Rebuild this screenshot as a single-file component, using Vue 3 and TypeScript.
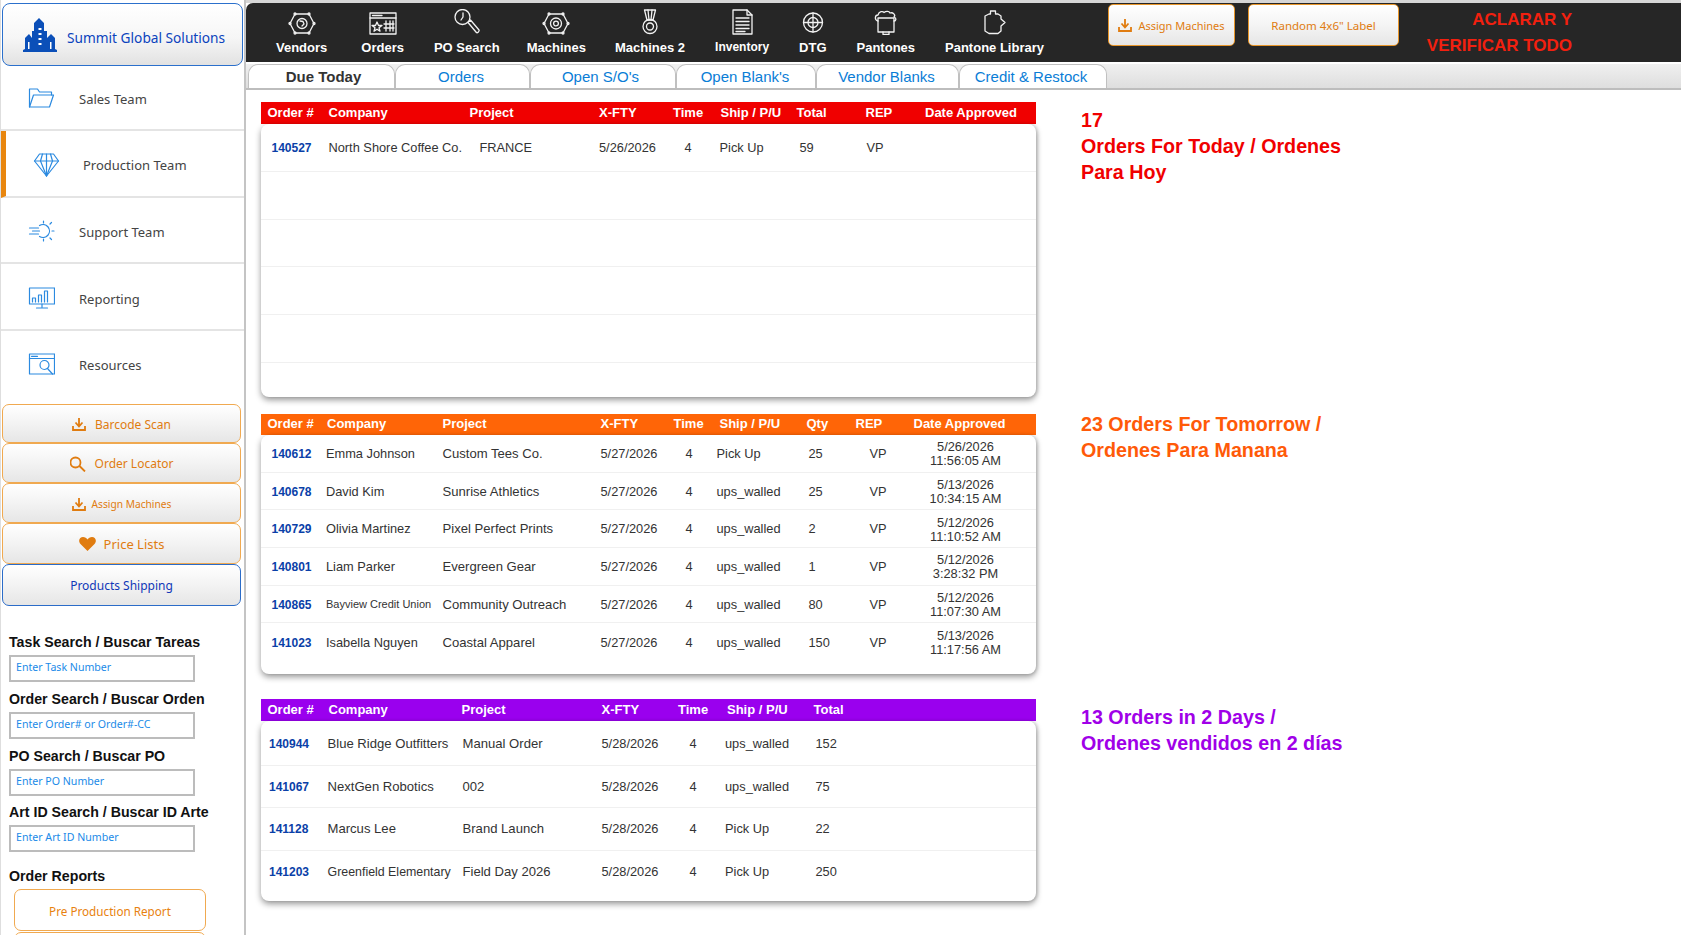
<script setup lang="ts">
const circle = (cx: number, cy: number, r: number): string =>
  `M${cx - r} ${cy}a${r} ${r} 0 1 0 ${r * 2} 0a${r} ${r} 0 1 0 ${-r * 2} 0`

const hexagon = 'M8 5H22L27 14.5L22 24H8L3 14.5Z'
const hexDots = [circle(8, 5, 1), circle(22, 5, 1), circle(27, 14.5, 1), circle(22, 24, 1), circle(8, 24, 1), circle(3, 14.5, 1)]

const navItems = [
  { label: 'Vendors', w: 'n1', paths: [hexagon, ...hexDots, circle(15, 14.5, 5), 'M13 12l3 .5 1 2.5-2 2'] },
  { label: 'Orders', w: 'n2', paths: ['M2 4H28V25H2Z', 'M2 9H28', 'M4.5 6.5H14', 'M9 13l1.5 3.5h3.5l-3 2.2 1 3.5-3-2-3 2 1-3.5-3-2.2h3.5Z', 'M18 12v10M22 12v10M25 12v10M16 15h10M16 19h10'] },
  { label: 'PO Search', w: 'n3', paths: [circle(10.5, 8, 7.5), 'M16 13.5l2.5-2.5 8.5 10c.8 1-1.6 3.4-2.6 2.5Z', 'M11 4v4l-2 3'] },
  { label: 'Machines', w: 'n4', paths: [hexagon, ...hexDots, circle(15, 14.5, 5.5), circle(15, 14.5, 2.4)] },
  { label: 'Machines 2', w: 'n5', paths: ['M9.5 1H20.5L18 11H12Z', 'M13 1L14 11M17 1L16 11', circle(15, 17.5, 7), circle(15, 17.5, 3.5)] },
  { label: 'Inventory', w: 'n6', paths: ['M6 1H20L25 6V25H6Z', 'M20 1V6H25', 'M9 9H22M9 12.5H22M9 16H22M9 19.5H22M9 22.5H18'] },
  { label: 'DTG', w: 'n7', paths: [circle(15, 13.5, 9.5), circle(15, 13.5, 5), 'M5.5 13.5H24.5M15 4V23'] },
  { label: 'Pantones', w: 'n8', paths: ['M7 12C3 11 4 6 7 6C8 2 12 2 13 3.5C15 2 18 2 19 4C22 3 25 6 23 8C26 9 25 12 23 12', 'M7 9H23V23H7Z', 'M12 23V25.5H18V23'] },
  { label: 'Pantone Library', w: 'n9', paths: ['M5 7L9 5H10.5V2H15.5V5H18L21 7V10L25 13.5L21 17V22L18 24.5H9L5 22Z'] },
]

const tabs = ['Due Today', 'Orders', "Open S/O's", "Open Blank's", 'Vendor Blanks', 'Credit & Restock']

const sideItems = [
  { label: 'Sales Team', cls: '', paths: ['M1 20V2H9L11 5H23V8', 'M1 20H21L25 8H5Z'] },
  { label: 'Production Team', cls: 'is-active', paths: ['M6 1H20L25 8L13 23L1 8Z', 'M1 8H25', 'M9 1L7 8L13 23L19 8L17 1', 'M13 1V23'] },
  { label: 'Support Team', cls: '', paths: ['M11 5.5A6.5 6.5 0 1 1 11 16.5', 'M15 1V3M15 19V21M21.5 4L23 2.5M21.5 18L23 19.5M23.5 11H25.5', 'M1 8H10M4 11H11M1 14H10'] },
  { label: 'Reporting', cls: '', paths: ['M1 1H26V17H1Z', 'M13.5 17V20M8 21H19', 'M4 15V11H7V15M10 15V8H13V15M16 15V4H19V15'] },
  { label: 'Resources', cls: '', paths: ['M1 1H26V21H1Z', 'M1 5.5H26', 'M3 3.3H9', circle(16, 12, 4.5), 'M19 15.5L24 21'] },
]

const downloadPaths = ['M7 1V9M3.5 5.5L7 9.5L10.5 5.5', 'M1 9V13H13V9']

const sideButtons = [
  { label: 'Barcode Scan', cls: 'b1', icon: 'download' },
  { label: 'Order Locator', cls: 'b2', icon: 'search' },
  { label: 'Assign Machines', cls: 'b3', icon: 'download' },
  { label: 'Price Lists', cls: 'b4', icon: 'heart' },
]

const searches = [
  { label: 'Task Search / Buscar Tareas', ph: 'Enter Task Number', cls: 's1' },
  { label: 'Order Search / Buscar Orden', ph: 'Enter Order# or Order#-CC', cls: 's2' },
  { label: 'PO Search / Buscar PO', ph: 'Enter PO Number', cls: 's3' },
  { label: 'Art ID Search / Buscar ID Arte', ph: 'Enter Art ID Number', cls: 's4' },
]

const head1 = ['Order #', 'Company', 'Project', 'X-FTY', 'Time', 'Ship / P/U', 'Total', 'REP', 'Date Approved']
const head2 = ['Order #', 'Company', 'Project', 'X-FTY', 'Time', 'Ship / P/U', 'Qty', 'REP', 'Date Approved']
const head3 = ['Order #', 'Company', 'Project', 'X-FTY', 'Time', 'Ship / P/U', 'Total']

const rows1 = [['140527', 'North Shore Coffee Co.', 'FRANCE', '5/26/2026', '4', 'Pick Up', '59', 'VP']]

const rows2 = [
  { c: ['140612', 'Emma Johnson', 'Custom Tees Co.', '5/27/2026', '4', 'Pick Up', '25', 'VP'], d: ['5/26/2026', '11:56:05 AM'] },
  { c: ['140678', 'David Kim', 'Sunrise Athletics', '5/27/2026', '4', 'ups_walled', '25', 'VP'], d: ['5/13/2026', '10:34:15 AM'] },
  { c: ['140729', 'Olivia Martinez', 'Pixel Perfect Prints', '5/27/2026', '4', 'ups_walled', '2', 'VP'], d: ['5/12/2026', '11:10:52 AM'] },
  { c: ['140801', 'Liam Parker', 'Evergreen Gear', '5/27/2026', '4', 'ups_walled', '1', 'VP'], d: ['5/12/2026', '3:28:32 PM'] },
  { c: ['140865', 'Bayview Credit Union', 'Community Outreach', '5/27/2026', '4', 'ups_walled', '80', 'VP'], d: ['5/12/2026', '11:07:30 AM'], small: true },
  { c: ['141023', 'Isabella Nguyen', 'Coastal Apparel', '5/27/2026', '4', 'ups_walled', '150', 'VP'], d: ['5/13/2026', '11:17:56 AM'] },
]

const rows3 = [
  ['140944', 'Blue Ridge Outfitters', 'Manual Order', '5/28/2026', '4', 'ups_walled', '152'],
  ['141067', 'NextGen Robotics', '002', '5/28/2026', '4', 'ups_walled', '75'],
  ['141128', 'Marcus Lee', 'Brand Launch', '5/28/2026', '4', 'Pick Up', '22'],
  ['141203', 'Greenfield Elementary', 'Field Day 2026', '5/28/2026', '4', 'Pick Up', '250'],
]
</script>

<template>
  <div class="page">
    <aside class="sidebar">
      <div class="brand">
        <svg class="brand-icon" viewBox="0 0 34 35" aria-hidden="true">
          <path class="brand-fill" d="M0 35V33L2 32V21L6 17L9 21V14H11V6L16 1L21 6V14H24V21L28 17L32 21V32L34 33V35Z" />
          <path class="brand-window" d="M15.5 11h3v2h-3zM15.5 16h3v2h-3zM15.5 21h3v2h-3zM15.5 26h3v2h-3zM5 25h1.5v7H5zM27 25h1.5v7H27z" />
        </svg>
        <span>Summit Global Solutions</span>
      </div>

      <div v-for="item in sideItems" :key="item.label" class="side-item" :class="item.cls">
        <svg class="side-icon" viewBox="0 0 26 24" aria-hidden="true">
          <path v-for="d in item.paths" :key="d" :d="d" />
        </svg>
        <span>{{ item.label }}</span>
      </div>

      <div class="side-buttons">
        <div v-for="b in sideButtons" :key="b.label" class="side-btn" :class="b.cls">
          <svg v-if="b.icon === 'download'" class="btn-icon" viewBox="0 0 14 14" aria-hidden="true">
            <path v-for="d in downloadPaths" :key="d" :d="d" />
          </svg>
          <svg v-else-if="b.icon === 'search'" class="btn-icon big" viewBox="0 0 16 16" aria-hidden="true">
            <path d="M10.5 6.5a5 5 0 1 0-10 0a5 5 0 1 0 10 0M9.5 10L15 15.5" />
          </svg>
          <svg v-else class="btn-heart" viewBox="0 0 17 14" aria-hidden="true">
            <path d="M8.5 14L1.5 7C-1.5 3.5 1 0 4 0C6 0 7.5 1 8.5 2.5C9.5 1 11 0 13 0C16 0 18.5 3.5 15.5 7Z" />
          </svg>
          <span>{{ b.label }}</span>
        </div>
        <div class="side-btn blue">Products Shipping</div>
      </div>

      <form class="searches" @submit.prevent>
        <label v-for="s in searches" :key="s.label" class="search" :class="s.cls">
          <span class="search-label">{{ s.label }}</span>
          <input type="text" :placeholder="s.ph" />
        </label>
      </form>

      <h3 class="reports-title">Order Reports</h3>
      <div class="report-btn">Pre Production Report</div>
      <div class="report-btn"></div>
    </aside>

    <main class="main">
      <header class="topbar">
        <nav class="nav">
          <a v-for="n in navItems" :key="n.label" class="nav-item" :class="n.w">
            <svg class="nav-icon" viewBox="0 0 30 26" aria-hidden="true">
              <path v-for="d in n.paths" :key="d" :d="d" />
            </svg>
            <span>{{ n.label }}</span>
          </a>
        </nav>
        <div class="top-btn assign">
          <svg class="btn-icon" viewBox="0 0 14 14" aria-hidden="true">
            <path v-for="d in downloadPaths" :key="d" :d="d" />
          </svg>
          <span>Assign Machines</span>
        </div>
        <div class="top-btn random">Random 4x6" Label</div>
        <div class="warning">ACLARAR Y<br />VERIFICAR TODO</div>
      </header>

      <div class="tabs">
        <a v-for="(t, i) in tabs" :key="t" class="tab" :class="['tab' + i, { active: i === 0 }]">{{ t }}</a>
      </div>

      <section class="block first">
        <div class="table t1">
          <div class="head red">
            <span v-for="h in head1" :key="h">{{ h }}</span>
          </div>
          <div class="card">
            <div v-for="r in rows1" :key="r[0]" class="row">
              <span v-for="(c, i) in r" :key="i" :class="{ id: i === 0 }">{{ c }}</span>
            </div>
            <div v-for="n in 4" :key="n" class="row"></div>
          </div>
        </div>
        <p class="note note-red">17<br />Orders For Today / Ordenes<br />Para Hoy</p>
      </section>

      <section class="block second">
        <div class="table t2">
          <div class="head orange">
            <span v-for="h in head2" :key="h">{{ h }}</span>
          </div>
          <div class="card">
            <div v-for="r in rows2" :key="r.c[0]" class="row">
              <span v-for="(c, i) in r.c" :key="i" :class="{ id: i === 0, small: i === 1 && r.small }">{{ c }}</span>
              <span class="date">{{ r.d[0] }}<br />{{ r.d[1] }}</span>
            </div>
          </div>
        </div>
        <p class="note note-orange">23 Orders For Tomorrow /<br />Ordenes Para Manana</p>
      </section>

      <section class="block third">
        <div class="table t3">
          <div class="head purple">
            <span v-for="h in head3" :key="h">{{ h }}</span>
          </div>
          <div class="card">
            <div v-for="r in rows3" :key="r[0]" class="row">
              <span v-for="(c, i) in r" :key="i" :class="{ id: i === 0 }">{{ c }}</span>
            </div>
          </div>
        </div>
        <p class="note note-purple">13 Orders in 2 Days /<br />Ordenes vendidos en 2 días</p>
      </section>
    </main>
  </div>
</template>

<style>
html,
body {
  margin: 0;
  background: #fff;
  overflow: hidden;
}
</style>

<style scoped>
.page {
  display: flex;
  height: 935px;
  overflow: hidden;
  background: #fff;
  font-family: "Liberation Sans", Arial, sans-serif;
  color: #333;
}

/* Sidebar */
.sidebar {
  flex: 0 0 246px;
  box-sizing: border-box;
  height: 935px;
  padding: 3px 0 0 0;
  border-left: 1px solid #dedede;
  border-right: 2px solid #c4c4c4;
  font-family: "Noto Sans", Tahoma, sans-serif;
  overflow: hidden;
}
.brand {
  box-sizing: border-box;
  width: 241px;
  height: 63px;
  margin-left: 1px;
  display: flex;
  align-items: center;
  padding: 0 0 0 20px;
  gap: 10px;
  border: 1.5px solid #2b70cc;
  border-radius: 8px;
  background: linear-gradient(#ffffff, #f6f6f6 55%, #e2e2e2);
  color: #0b43bd;
  font-size: 13.7px;
  white-space: nowrap;
}
.brand span {
  margin-top: 5px;
}
.brand-icon {
  width: 34px;
  height: 35px;
  flex: none;
}
.brand-fill {
  fill: #0b4fb8;
}
.brand-window {
  fill: #fff;
}
.side-item {
  box-sizing: border-box;
  height: 66.5px;
  display: flex;
  align-items: center;
  padding: 5px 0 0 27px;
  gap: 24px;
  border-bottom: 2px solid #e4e4e4;
  font-size: 13px;
  color: #444;
}
.side-item:nth-of-type(2) {
  height: 65px;
  padding-top: 2px;
}
.side-item:nth-of-type(6) {
  border-bottom: 0;
  height: 73px;
  padding-top: 0;
  padding-bottom: 4px;
}
.side-item.is-active {
  border-left: 5px solid #e8860f;
  padding-left: 27px;
  padding-top: 4px;
  gap: 23px;
}
.side-icon {
  width: 27px;
  height: 24px;
  flex: none;
  fill: none;
  stroke: #2b8ae0;
  stroke-width: 1.2;
  stroke-linejoin: round;
  stroke-linecap: round;
}
.side-buttons {
  display: flex;
  flex-direction: column;
  width: 239px;
  margin-left: 1px;
}
.side-btn {
  box-sizing: border-box;
  height: 40px;
  padding-top: 2px;
  display: flex;
  align-items: center;
  justify-content: center;
  gap: 9px;
  border: 1.5px solid #f0a950;
  border-radius: 7px;
  background: linear-gradient(#ffffff, #f3f3f3 50%, #e6e6e6);
  color: #e07c10;
  font-size: 12px;
}
.b1 {
  height: 39px;
}
.b3 {
  font-size: 10.2px;
  gap: 6px;
}
.b4 {
  height: 41px;
  gap: 8px;
  font-size: 13px;
}
.blue {
  height: 42px;
  border-color: #2b6cc8;
  color: #1038b8;
  font-size: 12px;
}
.btn-icon {
  width: 14px;
  height: 14px;
  flex: none;
  fill: none;
  stroke: #e07c10;
  stroke-width: 1.8;
}
.btn-icon.big {
  width: 16px;
  height: 16px;
}
.btn-heart {
  width: 17px;
  height: 14px;
  flex: none;
  fill: #e07c10;
}
.searches {
  margin: 0;
  padding-left: 8px;
  font-family: "Liberation Sans", Arial, sans-serif;
}
.search {
  display: block;
}
.s1 {
  padding-top: 28px;
}
.s2,
.s3 {
  padding-top: 9px;
}
.s4 {
  padding-top: 8px;
}
.search-label {
  display: block;
  height: 21px;
  line-height: 16px;
  font-size: 14.2px;
  font-weight: 700;
  color: #111;
  white-space: nowrap;
}
.search input {
  display: block;
  box-sizing: border-box;
  width: 186px;
  height: 27px;
  margin: 0;
  padding: 0 0 3px 5px;
  border: 2px solid #bcbcbc;
  border-radius: 0;
  outline: 0;
  background: #fff;
  font-family: "Noto Sans", Tahoma, sans-serif;
  font-size: 10.6px;
}
.search input::placeholder {
  color: #1a8ae8;
  opacity: 1;
}
.reports-title {
  margin: 16px 0 0 8px;
  font-size: 14.2px;
  line-height: 16px;
  font-weight: 700;
  color: #111;
  font-family: "Liberation Sans", Arial, sans-serif;
}
.report-btn {
  box-sizing: border-box;
  width: 192px;
  height: 42px;
  margin: 5px 0 0 13px;
  padding-top: 2px;
  display: flex;
  align-items: center;
  justify-content: center;
  border: 1.5px solid #f0a950;
  border-radius: 7px;
  background: #fff;
  color: #e8820f;
  font-size: 11.7px;
}
.report-btn + .report-btn {
  margin-top: 1px;
}

/* Main column */
.main {
  flex: 1;
  min-width: 0;
  padding-top: 3px;
  background: linear-gradient(#d6d6d6 3px, transparent 3px);
}
.topbar {
  height: 59px;
  display: flex;
  align-items: flex-start;
  background: #262626;
  border-radius: 7px 0 0 0;
}
.nav {
  display: flex;
  width: 862px;
  flex: none;
}
.nav-item {
  display: flex;
  flex-direction: column;
  align-items: center;
  color: #fff;
  font-size: 13px;
  font-weight: 700;
  white-space: nowrap;
  padding-top: 6px;
  margin-right: 30px;
}
.n1 {
  margin-left: 30px;
  margin-right: 34px;
}
.n3 {
  margin-right: 27px;
}
.n4 {
  margin-right: 29px;
}
.n6 {
  font-size: 12px;
}
.nav-icon {
  width: 30px;
  height: 26px;
  margin: 0 -6px 5px;
  fill: none;
  stroke: #f2f2f2;
  stroke-width: 1.3;
  stroke-linejoin: round;
  stroke-linecap: round;
}
.nav-item span {
  line-height: 15px;
}
.top-btn {
  box-sizing: border-box;
  height: 42px;
  margin-top: 1px;
  display: flex;
  align-items: center;
  justify-content: center;
  gap: 6px;
  border: 1.5px solid #e8962a;
  border-radius: 5px;
  background: linear-gradient(#ffffff, #f4f4f4 50%, #e6e6e6);
  color: #e07c10;
  font-family: "Noto Sans", Tahoma, sans-serif;
  font-size: 11px;
  white-space: nowrap;
}
.assign {
  width: 127px;
}
.random {
  width: 151px;
  margin-left: 13px;
  font-size: 11.5px;
}
.warning {
  width: 173px;
  margin-top: 4px;
  text-align: right;
  color: #f2200f;
  font-size: 17px;
  font-weight: 700;
  line-height: 26px;
  white-space: nowrap;
}

/* Tabs */
.tabs {
  box-sizing: border-box;
  height: 26px;
  margin-top: 2px;
  padding-left: 2px;
  display: flex;
  background: linear-gradient(#f0f0f0, #dedede);
  border-bottom: 2px solid #bdbdbd;
}
.tab {
  box-sizing: border-box;
  height: 24px;
  padding-right: 3px;
  display: flex;
  align-items: center;
  justify-content: center;
  border: 1.5px solid #c0c0c0;
  border-bottom: 0;
  border-radius: 10px 10px 0 0;
  background: #fff;
  color: #0a7dd6;
  font-size: 15px;
  white-space: nowrap;
}
.tab0 { width: 147px; padding-left: 6px; padding-right: 2px; }
.tab1 { width: 135px; }
.tab2 { width: 146px; padding-right: 5px; }
.tab3 { width: 140px; padding-right: 2px; }
.tab4 { width: 143px; padding-right: 2px; }
.tab5 { width: 148px; padding-right: 4px; }
.tab.active {
  color: #333;
  font-weight: 700;
}

/* Order blocks */
.block {
  display: flex;
  align-items: flex-start;
  margin-left: 15px;
}
.first { margin-top: 12px; }
.second { margin-top: 17px; }
.third { margin-top: 25px; }
.table {
  flex: 0 0 775px;
}
.head,
.row {
  display: grid;
  white-space: nowrap;
}
.head {
  box-sizing: border-box;
  height: 22px;
  padding: 0 0 2px 6.5px;
  align-items: center;
  color: #fff;
  font-size: 13px;
  font-weight: 700;
}
.red { background: #f00000; }
.orange { background: #ff6507; height: 21px; }
.purple { background: #9a00ee; }
.card {
  background: #fff;
  border-radius: 8px;
  box-shadow: 0 3px 6px rgba(0, 0, 0, 0.4), 2px 0 3px rgba(0, 0, 0, 0.12);
}
.row {
  box-sizing: border-box;
  align-items: center;
  border-bottom: 1px solid #f0f0f0;
  font-size: 12.8px;
  color: #333;
}
.row:last-child {
  border-bottom: 0;
}
.id {
  padding-top: 1px;
  color: #0a3fa8;
  font-size: 12px;
  font-weight: 700;
}
.small {
  font-size: 11px;
}
.date {
  padding-top: 2px;
  text-align: center;
  line-height: 14px;
}

.t1 .head {
  grid-template-columns: 61px 141px 129.5px 74px 47.5px 76px 69px 59.5px auto;
}
.t1 .card {
  padding-bottom: 34px;
}
.t1 .row {
  height: 47.8px;
  padding-left: 10.5px;
  grid-template-columns: 57px 151px 119.5px 85.5px 35px 80px 67px auto;
}
.t1 .row:last-child {
  border-bottom: 1px solid #f0f0f0;
}
.t2 .head {
  grid-template-columns: 59.5px 115.5px 158px 73px 46px 87px 49px 58px auto;
}
.t2 .card {
  padding-bottom: 13px;
}
.t2 .row {
  height: 37.7px;
  padding-left: 10.5px;
  grid-template-columns: 54.5px 116.5px 158px 85px 31px 92px 61px 36px 120px;
}
.t2 .row span:nth-child(3) {
  font-size: 13.1px;
}
.t3 .head {
  grid-template-columns: 61px 133px 140px 76.5px 49px 86.5px auto;
}
.t3 .card {
  padding: 2px 0 8px;
}
.t3 .row {
  height: 42.5px;
  padding-left: 8px;
  grid-template-columns: 58.5px 135px 139px 88px 35.5px 90.5px auto;
}
.t3 .row span:nth-child(2),
.t3 .row span:nth-child(3) {
  font-size: 13.1px;
}
.t3 .row:last-child span:nth-child(2) {
  font-size: 12.4px;
}

.note {
  margin: 0 0 0 45px;
  font-size: 19.7px;
  font-weight: 700;
  line-height: 26px;
  white-space: nowrap;
}
.note-red { color: #f00000; margin-top: 5px; }
.note-orange { color: #ff5a08; margin-top: -3px; }
.note-purple { color: #a000e8; margin-top: 5px; }
</style>
